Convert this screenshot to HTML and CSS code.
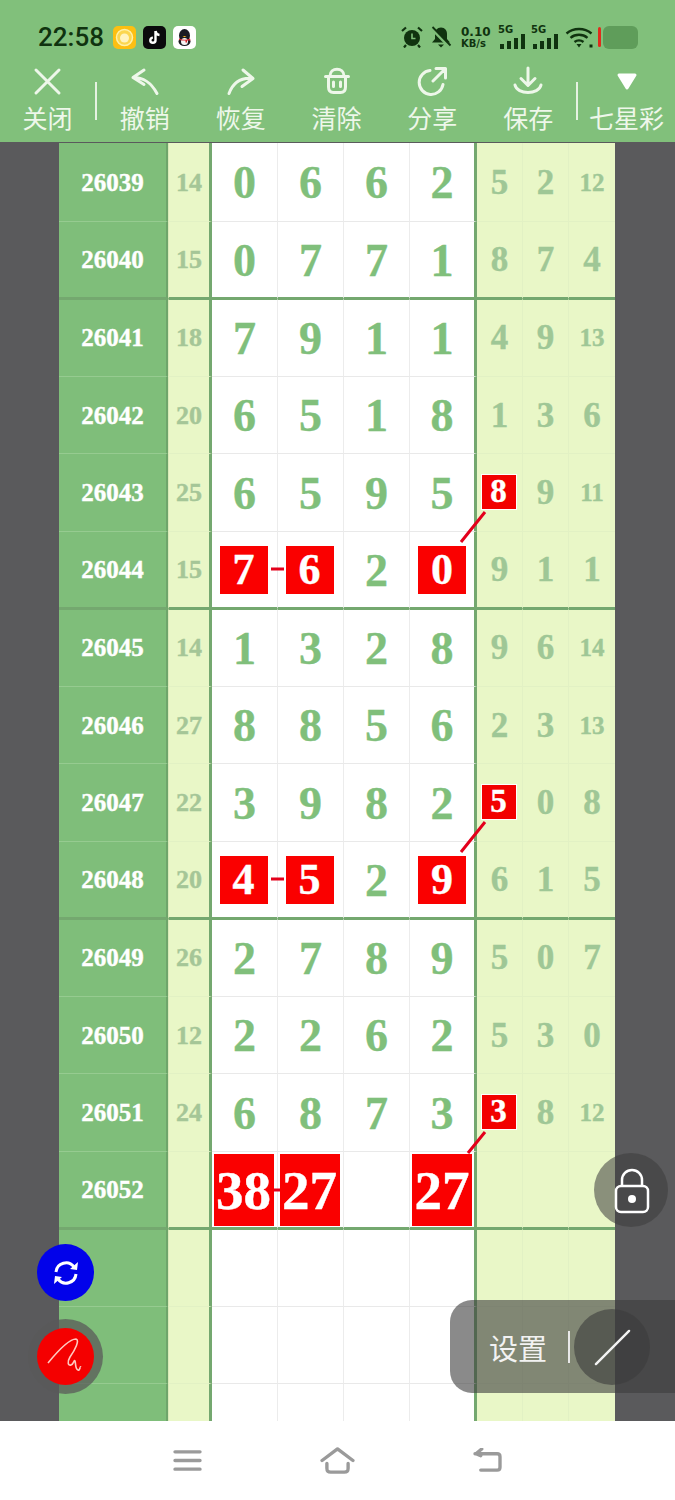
FILE: index.html
```html
<!DOCTYPE html>
<html lang="en">
<head>
    <meta charset="UTF-8">
    <meta name="viewport" content="width=device-width, initial-scale=1.0">
    <title>七星彩</title>
    <link rel="stylesheet" href="styles.css">
</head>
<body>
<div class="page">
    <!-- Status bar -->
    <div class="status-bar">
        <span class="time">22:58</span>
        <div class="app-icons">
            <svg class="app-icon" viewBox="0 0 23 23"><rect width="23" height="23" rx="5" fill="#fdbf12"/><circle cx="11.5" cy="11.5" r="8" fill="#fbd650" stroke="#fff0a8" stroke-width="1.5"/><circle cx="11.5" cy="12" r="4.5" fill="#fff3c0"/></svg>
            <svg class="app-icon" viewBox="0 0 23 23"><rect width="23" height="23" rx="5" fill="#0a0a0c"/><path d="M12.5 5v9.2a2.6 2.6 0 1 1-2.6-2.6M12.5 5c.3 2.400 1.800 3.800 4 4" fill="none" stroke="#fff" stroke-width="2.400"/></svg>
            <svg class="app-icon" viewBox="0 0 23 23"><rect width="23" height="23" rx="5" fill="#fff"/><ellipse cx="11.500" cy="9.500" rx="5.500" ry="6.500" fill="#1b1b22"/><ellipse cx="11.500" cy="15.500" rx="6" ry="4.500" fill="#1b1b22"/><ellipse cx="11.500" cy="15.500" rx="3.500" ry="3.500" fill="#f5f5f5"/><path d="M6 12.500q5.500 2.500 11 0l.5 2h-3.500v2h-1.500v-2q-3 0-6.500-.5z" fill="#d8262c"/><path d="M9.500 10h4l-2 1.300z" fill="#f6b21a"/></svg>
        </div>
        <div class="status-right">
            <svg class="st-alarm" viewBox="0 0 22 22"><circle cx="11" cy="12" r="8" fill="#10330f"/><path d="M11 7.500v5h3.500" fill="none" stroke="#7fbf79" stroke-width="1.600"/><path d="M1 5l4-3.500M21 5l-4-3.500M5 19l-2 2.500M17 19l2 2.500" stroke="#10330f" stroke-width="2.200"/></svg>
            <svg class="st-bell" viewBox="0 0 22 22"><path d="M11 1.500c4 0 6 3 6 6.500v5l3 3.500H2l3-3.500V8c0-3.500 2-6.500 6-6.500z" fill="#10330f"/><path d="M8 18.500h6l-3 3z" fill="#10330f"/><path d="M1.500 2.500l17 17.500" stroke="#7fbf79" stroke-width="3"/><path d="M2.500 1l18 18.500" stroke="#10330f" stroke-width="1.800"/></svg>
            <div class="speed"><span>0.10</span><span class="speed-unit">KB/s</span></div>
            <div class="signal">
                <span class="signal-label">5G</span>
                <div class="bars"><i class="b1"></i><i class="b2"></i><i class="b3"></i><i class="b4"></i></div>
            </div>
            <div class="signal">
                <span class="signal-label">5G</span>
                <div class="bars"><i class="b1"></i><i class="b2"></i><i class="b3"></i><i class="b4"></i></div>
            </div>
            <svg class="st-wifi" viewBox="0 0 28 22"><path d="M1.500 7.500c7-6 18-6 25 0M5.500 11.800c4.800-4 12.200-4 17 0M9.500 16c2.600-2 6.400-2 9 0" fill="none" stroke="#10330f" stroke-width="2.400"/><path d="M11.500 18h5L14 21.500z" fill="#10330f"/><rect x="24.500" y="18.500" width="3" height="3" fill="#10330f"/></svg>
            <div class="battery">
                <span class="battery-low"></span>
                <span class="battery-body"></span>
            </div>
        </div>
    </div>

    <!-- Toolbar -->
    <div class="toolbar">
        <div class="tool tool-first">
            <svg class="tool-icon" viewBox="0 0 30 30"><path d="M4 4l23 23M27 4L4 27"/></svg>
            <span>关闭</span>
        </div>
        <div class="tool-divider"></div>
        <div class="tool">
            <svg class="tool-icon" viewBox="0 0 30 30"><path d="M14 4L3 11.500l11 7M3 11.500c11 0 18 5 24 16"/></svg>
            <span>撤销</span>
        </div>
        <div class="tool">
            <svg class="tool-icon" viewBox="0 0 30 30"><path d="M17 4l10 8.500-11 8M27 12.500C14 11 7 17 3 27.500"/></svg>
            <span>恢复</span>
        </div>
        <div class="tool">
            <svg class="tool-icon" viewBox="0 0 30 30"><path d="M8 10c0-9 14-9 14 0M3.500 10.500h23M6.500 11v10c0 4 2 5.500 5 5.500h7c3 0 5-1.500 5-5.500V11M11.500 16v4.500M18.500 16v4.500"/></svg>
            <span>清除</span>
        </div>
        <div class="tool">
            <svg class="tool-icon" viewBox="0 0 30 30"><path d="M13 4.500a12 12 0 1 0 13 14M16 15L28 3M19 2.500h9.500V12"/></svg>
            <span>分享</span>
        </div>
        <div class="tool">
            <svg class="tool-icon" viewBox="0 0 30 30"><path d="M15 2v17M8 12.500l7 7 7-7M2 19c2 10 24 10 26 0"/></svg>
            <span>保存</span>
        </div>
        <div class="tool-divider"></div>
        <div class="tool tool-last">
            <svg class="tool-icon tool-triangle" viewBox="0 0 30 30"><path d="M7 9h16l-8 13z"/></svg>
            <span>七星彩</span>
        </div>
    </div>

    <!-- Number sheet -->
    <div class="main">
        <div class="sheet">
            <div class="row"><div class="period">26039</div><div class="sum">14</div><div class="num">0</div><div class="num">6</div><div class="num">6</div><div class="num num-last">2</div><div class="side">5</div><div class="side">2</div><div class="side side-small">12</div></div>
            <div class="row row-end"><div class="period">26040</div><div class="sum">15</div><div class="num">0</div><div class="num">7</div><div class="num">7</div><div class="num num-last">1</div><div class="side">8</div><div class="side">7</div><div class="side">4</div></div>
            <div class="row"><div class="period">26041</div><div class="sum">18</div><div class="num">7</div><div class="num">9</div><div class="num">1</div><div class="num num-last">1</div><div class="side">4</div><div class="side">9</div><div class="side side-small">13</div></div>
            <div class="row"><div class="period">26042</div><div class="sum">20</div><div class="num">6</div><div class="num">5</div><div class="num">1</div><div class="num num-last">8</div><div class="side">1</div><div class="side">3</div><div class="side">6</div></div>
            <div class="row"><div class="period">26043</div><div class="sum">25</div><div class="num">6</div><div class="num">5</div><div class="num">9</div><div class="num num-last">5</div><div class="side"><span class="mark">8</span></div><div class="side">9</div><div class="side side-small">11</div></div>
            <div class="row row-end"><div class="period">26044</div><div class="sum">15</div><div class="num"><span class="hit">7</span></div><div class="num"><span class="hit">6</span></div><div class="num">2</div><div class="num num-last"><span class="hit">0</span></div><div class="side">9</div><div class="side">1</div><div class="side">1</div></div>
            <div class="row"><div class="period">26045</div><div class="sum">14</div><div class="num">1</div><div class="num">3</div><div class="num">2</div><div class="num num-last">8</div><div class="side">9</div><div class="side">6</div><div class="side side-small">14</div></div>
            <div class="row"><div class="period">26046</div><div class="sum">27</div><div class="num">8</div><div class="num">8</div><div class="num">5</div><div class="num num-last">6</div><div class="side">2</div><div class="side">3</div><div class="side side-small">13</div></div>
            <div class="row"><div class="period">26047</div><div class="sum">22</div><div class="num">3</div><div class="num">9</div><div class="num">8</div><div class="num num-last">2</div><div class="side"><span class="mark">5</span></div><div class="side">0</div><div class="side">8</div></div>
            <div class="row row-end"><div class="period">26048</div><div class="sum">20</div><div class="num"><span class="hit">4</span></div><div class="num"><span class="hit">5</span></div><div class="num">2</div><div class="num num-last"><span class="hit">9</span></div><div class="side">6</div><div class="side">1</div><div class="side">5</div></div>
            <div class="row"><div class="period">26049</div><div class="sum">26</div><div class="num">2</div><div class="num">7</div><div class="num">8</div><div class="num num-last">9</div><div class="side">5</div><div class="side">0</div><div class="side">7</div></div>
            <div class="row"><div class="period">26050</div><div class="sum">12</div><div class="num">2</div><div class="num">2</div><div class="num">6</div><div class="num num-last">2</div><div class="side">5</div><div class="side">3</div><div class="side">0</div></div>
            <div class="row"><div class="period">26051</div><div class="sum">24</div><div class="num">6</div><div class="num">8</div><div class="num">7</div><div class="num num-last">3</div><div class="side"><span class="mark">3</span></div><div class="side">8</div><div class="side side-small">12</div></div>
            <div class="row row-end"><div class="period">26052</div><div class="sum"></div><div class="num"><span class="hit hit-big">38</span></div><div class="num"><span class="hit hit-big">27</span></div><div class="num"></div><div class="num num-last"><span class="hit hit-big">27</span></div><div class="side"></div><div class="side"></div><div class="side"></div></div>
            <div class="row"><div class="period"></div><div class="sum"></div><div class="num"></div><div class="num"></div><div class="num"></div><div class="num num-last"></div><div class="side"></div><div class="side"></div><div class="side"></div></div>
            <div class="row"><div class="period"></div><div class="sum"></div><div class="num"></div><div class="num"></div><div class="num"></div><div class="num num-last"></div><div class="side"></div><div class="side"></div><div class="side"></div></div>
            <div class="row"><div class="period"></div><div class="sum"></div><div class="num"></div><div class="num"></div><div class="num"></div><div class="num num-last"></div><div class="side"></div><div class="side"></div><div class="side"></div></div>
        </div>

        <!-- Connector lines drawn over the sheet -->
        <svg class="links" viewBox="0 0 675 1279">
            <path d="M485 370L461 400M485 680L461 710M485 990L468 1011"/>
            <path d="M271 427h13M271 737h13M274 1048h6"/>
        </svg>

        <div class="fab fab-sync">
            <svg viewBox="0 0 30 30"><path d="M5 14a10 10 0 0 1 18-5M25 16a10 10 0 0 1-18 5"/><path class="fill" d="M19 11l7 1 1-8zM11 19l-7-1-1 8z"/></svg>
        </div>
        <div class="fab-halo">
            <div class="fab fab-pen">
                <svg viewBox="0 0 57 57"><path d="M11 35C20 24 32 11 39 11C43 12 38 22 33 29C30 34 31 38 34 37C37 36 37 31 38 33C39 36 38 41 41 42C43 43 43 38 44 39"/></svg>
            </div>
        </div>
        <div class="lock-btn">
            <svg viewBox="0 0 36 48"><path d="M8 20v-7a10 10 0 0 1 20 0v7"/><rect x="2" y="19" width="32" height="26" rx="5"/><circle class="dot" cx="18" cy="32" r="4"/></svg>
        </div>
        <div class="settings">
            <span class="settings-label">设置</span>
            <span class="settings-bar"></span>
            <div class="settings-btn">
                <svg viewBox="0 0 40 40"><path d="M3 37L37 3"/></svg>
            </div>
        </div>
    </div>

    <!-- Navigation bar -->
    <div class="nav-bar">
        <svg viewBox="0 0 30 26"><path d="M2 4h26M2 13h26M2 22h26"/></svg>
        <svg class="nav-home" viewBox="0 0 36 28"><path d="M2 14L18 2l16 12M7 17v5c0 3 1 4 4 4h14c3 0 4-1 4-4v-5"/></svg>
        <svg viewBox="0 0 30 26"><path d="M2 6h23c2 0 3 1 3 3v11c0 2-1 3-3 3H8M9 1L3 6l5 2"/></svg>
    </div>
</div>
</body>
</html>
```

FILE: styles.css
```css
/* General page */
body {
    margin: 0;
    font-family: "Noto Sans", "Noto Sans CJK SC", sans-serif;
}

.page {
    width: 675px;
    height: 1500px;
    display: flex;
    flex-direction: column;
    overflow: hidden;
    background-color: #81c07b;
}

/* Status bar */
.status-bar {
    height: 62px;
    flex: none;
    display: flex;
    align-items: center;
    padding: 12px 37px 0 38px;
    box-sizing: border-box;
    color: #10330f;
}

.time {
    font-family: Roboto, sans-serif;
    font-size: 26px;
    font-weight: 500;
    width: 75px;
}

.app-icons {
    display: flex;
    gap: 7px;
}

.app-icon {
    width: 23px;
    height: 23px;
}

.status-right {
    margin-left: auto;
    display: flex;
    align-items: center;
}

.st-alarm {
    width: 22px;
    height: 22px;
    margin-right: 7px;
}

.st-bell {
    width: 22px;
    height: 22px;
    margin-right: 9px;
}

.speed {
    width: 37px;
    display: flex;
    flex-direction: column;
    font-family: "DejaVu Sans", sans-serif;
    font-size: 12px;
    font-weight: 700;
    line-height: 12px;
}

.speed-unit {
    font-size: 10px;
    line-height: 11px;
}

.signal {
    width: 27px;
    height: 24px;
    margin-right: 6px;
    position: relative;
}

.signal-label {
    position: absolute;
    top: -1px;
    left: 0;
    font-family: "DejaVu Sans", sans-serif;
    font-size: 10px;
    font-weight: 700;
}

.bars {
    position: absolute;
    right: 0;
    bottom: 0;
    display: flex;
    align-items: flex-end;
    gap: 3px;
}

.bars i {
    width: 4px;
    background-color: #10330f;
}

.bars .b1 { height: 5px; }
.bars .b2 { height: 8px; }
.bars .b3 { height: 11px; }
.bars .b4 { height: 15px; }

.st-wifi {
    width: 28px;
    height: 22px;
    margin-left: 1px;
    margin-right: 5px;
}

.battery {
    display: flex;
    align-items: center;
    gap: 2px;
}

.battery-low {
    width: 3px;
    height: 20px;
    background-color: #e02b1c;
    border-radius: 2px;
}

.battery-body {
    width: 35px;
    height: 23px;
    background-color: #5f9d5a;
    border-radius: 6px;
}

/* Toolbar */
.toolbar {
    height: 80px;
    flex: none;
    display: flex;
    color: #eef7ea;
}

.tool {
    width: 96px;
    display: flex;
    flex-direction: column;
    align-items: center;
    padding-top: 4px;
    box-sizing: border-box;
    font-family: "Noto Sans CJK SC", sans-serif;
    font-size: 25px;
    line-height: 32px;
}

.tool-first {
    width: 95px;
}

.tool-last {
    width: 97px;
}

.tool-icon {
    width: 30px;
    height: 30px;
    margin-bottom: 5px;
    fill: none;
    stroke: #eef7ea;
    stroke-width: 3;
    stroke-linecap: round;
    stroke-linejoin: round;
}

.tool-triangle {
    fill: #ffffff;
    stroke: #ffffff;
    stroke-width: 3;
}

.tool-divider {
    width: 2px;
    height: 38px;
    margin-top: 20px;
    flex: none;
    background-color: #e6f2e2;
}

/* Number sheet */
.main {
    height: 1279px;
    flex: none;
    position: relative;
    overflow: hidden;
    background-color: #5a5a5c;
}

.sheet {
    width: 556px;
    margin: 1px 0 0 59px;
}

.row {
    height: 77.5px;
    display: grid;
    grid-template-columns: 109px 44px 66px 66px 66px 67px 46px 46px 46px;
    font-family: "Liberation Serif", serif;
    font-weight: 700;
    -webkit-text-stroke: 0.4px;
}

.row:first-child {
    height: 78.5px;
}

.row > div {
    display: flex;
    align-items: center;
    justify-content: center;
    box-sizing: border-box;
    padding-top: 2px;
}

.period {
    background-color: #7fbe7a;
    color: #ffffff;
    font-size: 25px;
    border-right: 2px solid #6fa56b;
    border-bottom: 1px solid #96cb90;
}

.sum {
    background-color: #e9f7c7;
    color: #a5c697;
    font-size: 26px;
    border-right: 3px solid #74a86f;
    border-bottom: 1px solid #e2f1c4;
    border-left: 1px solid #d9eab8;
}

.num {
    background-color: #ffffff;
    color: #80bf7b;
    font-size: 46px;
    border-right: 1px solid #ececec;
    border-bottom: 1px solid #e9e9e9;
}

.num-last {
    border-right: 3px solid #74a86f;
}

.side {
    background-color: #e9f7c7;
    color: #9fc796;
    font-size: 35px;
    border-right: 1px solid #e2f1c4;
    border-bottom: 1px solid #e2f1c4;
}

.side:last-child {
    border-right: none;
}

.side-small {
    font-size: 25px;
}

/* Heavy line between groups: two px on the last row, one on the next */
.row-end > div {
    border-bottom: 2px solid #74a86f;
}

.row-end + .row > div {
    border-top: 1px solid #74a86f;
    padding-top: 1px;
}

.hit {
    width: 48px;
    height: 48px;
    margin-right: 2px;
    display: flex;
    align-items: center;
    justify-content: center;
    background-color: #fa0000;
    color: #ffffff;
    font-size: 44px;
    line-height: 1;
}

.num-last .hit {
    margin-right: 0;
}

.hit-big {
    width: 60px;
    height: 72px;
    font-size: 55px;
}

.mark {
    width: 34px;
    height: 34px;
    display: flex;
    align-items: center;
    justify-content: center;
    background-color: #f20000;
    color: #ffffff;
    font-size: 33px;
    line-height: 1;
    outline: 1px solid #ffffff;
    margin: -3px 0 0 -2px;
}

.links {
    position: absolute;
    top: 0;
    left: 0;
    width: 675px;
    height: 1279px;
    fill: none;
    stroke: #e3001b;
    stroke-width: 3;
}

/* Floating buttons */
.fab {
    position: absolute;
    left: 37px;
    top: 1102px;
    width: 57px;
    height: 57px;
    border-radius: 50%;
    display: flex;
    align-items: center;
    justify-content: center;
}

.fab-sync {
    background-color: #0202ea;
}

.fab-sync svg {
    width: 30px;
    height: 30px;
    fill: none;
    stroke: #ffffff;
    stroke-width: 3;
}

.fab-sync .fill {
    fill: #ffffff;
    stroke: none;
}

.fab-halo {
    position: absolute;
    left: 28px;
    top: 1177px;
    width: 75px;
    height: 75px;
    border-radius: 50%;
    background-color: rgba(90, 90, 90, 0.75);
}

.fab-pen {
    left: 9px;
    top: 9px;
    width: 57px;
    height: 57px;
    background-color: #f40000;
}

.fab-pen svg {
    width: 57px;
    height: 57px;
    fill: none;
    stroke: #ffc9c0;
    stroke-width: 1.6;
}

.lock-btn {
    position: absolute;
    left: 594px;
    top: 1011px;
    width: 74px;
    height: 74px;
    padding: 2px 0 0 2px;
    box-sizing: border-box;
    border-radius: 50%;
    background-color: rgba(60, 60, 60, 0.55);
    display: flex;
    align-items: center;
    justify-content: center;
}

.lock-btn svg {
    width: 36px;
    height: 48px;
    fill: none;
    stroke: #ffffff;
    stroke-width: 2.500;
}

.lock-btn .dot {
    fill: #ffffff;
    stroke: none;
}

.settings {
    position: absolute;
    left: 450px;
    top: 1158px;
    width: 225px;
    height: 93px;
    box-sizing: border-box;
    padding-left: 39px;
    border-radius: 22px 0 0 22px;
    background-color: rgba(60, 60, 60, 0.6);
    display: flex;
    align-items: center;
    color: #f2f2f2;
    font-family: "Noto Sans CJK SC", sans-serif;
    font-size: 29px;
}

.settings-bar {
    width: 2px;
    height: 32px;
    margin-left: 21px;
    background-color: #e8e8e8;
}

.settings-btn {
    position: absolute;
    left: 124px;
    top: 9px;
    width: 76px;
    height: 76px;
    border-radius: 50%;
    background-color: rgba(60, 60, 60, 0.6);
    display: flex;
    align-items: center;
    justify-content: center;
}

.settings-btn svg {
    width: 39px;
    height: 39px;
    fill: none;
    stroke: #f2f2f2;
    stroke-width: 2.500;
    stroke-linecap: round;
}

/* Navigation bar */
.nav-bar {
    flex: 1;
    display: flex;
    align-items: center;
    justify-content: center;
    gap: 118px;
    background-color: #ffffff;
}

.nav-bar svg {
    width: 29px;
    height: 25px;
    fill: none;
    stroke: #9a9a9a;
    stroke-width: 3.500;
    stroke-linecap: round;
    stroke-linejoin: round;
}

.nav-bar .nav-home {
    width: 35px;
    height: 27px;
}
```
